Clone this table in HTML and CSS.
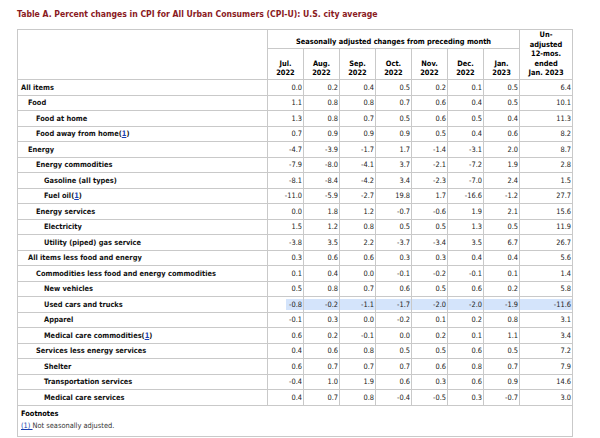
FILE: index.html
```html
<!DOCTYPE html>
<html>
<head>
<meta charset="utf-8">
<link rel="stylesheet" href="styles.css">
</head>
<body>
<div class="page">
  <h1 class="title">Table A. Percent changes in CPI for All Urban Consumers (CPI-U): U.S. city average</h1>
  <table class="cpi">
    <colgroup>
      <col class="c-label">
      <col class="c-m"><col class="c-m"><col class="c-m"><col class="c-m"><col class="c-m"><col class="c-m"><col class="c-m">
      <col class="c-y">
    </colgroup>
    <thead>
      <tr class="h1">
        <th rowspan="2"></th>
        <th colspan="7" class="sa">Seasonally adjusted changes from preceding month</th>
        <th rowspan="2" class="un">Un-<br>adjusted<br>12-mos.<br>ended<br>Jan. 2023</th>
      </tr>
      <tr class="h2">
        <th>Jul.<br>2022</th><th>Aug.<br>2022</th><th>Sep.<br>2022</th><th>Oct.<br>2022</th><th>Nov.<br>2022</th><th>Dec.<br>2022</th><th>Jan.<br>2023</th>
      </tr>
    </thead>
    <tbody>
      <tr><td class="l0">All items</td><td>0.0</td><td>0.2</td><td>0.4</td><td>0.5</td><td>0.2</td><td>0.1</td><td>0.5</td><td>6.4</td></tr>
      <tr><td class="l1">Food</td><td>1.1</td><td>0.8</td><td>0.8</td><td>0.7</td><td>0.6</td><td>0.4</td><td>0.5</td><td>10.1</td></tr>
      <tr><td class="l2">Food at home</td><td>1.3</td><td>0.8</td><td>0.7</td><td>0.5</td><td>0.6</td><td>0.5</td><td>0.4</td><td>11.3</td></tr>
      <tr><td class="l2">Food away from home(<a href="#fn1">1</a>)</td><td>0.7</td><td>0.9</td><td>0.9</td><td>0.9</td><td>0.5</td><td>0.4</td><td>0.6</td><td>8.2</td></tr>
      <tr><td class="l1">Energy</td><td>-4.7</td><td>-3.9</td><td>-1.7</td><td>1.7</td><td>-1.4</td><td>-3.1</td><td>2.0</td><td>8.7</td></tr>
      <tr><td class="l2">Energy commodities</td><td>-7.9</td><td>-8.0</td><td>-4.1</td><td>3.7</td><td>-2.1</td><td>-7.2</td><td>1.9</td><td>2.8</td></tr>
      <tr><td class="l3">Gasoline (all types)</td><td>-8.1</td><td>-8.4</td><td>-4.2</td><td>3.4</td><td>-2.3</td><td>-7.0</td><td>2.4</td><td>1.5</td></tr>
      <tr><td class="l3">Fuel oil(<a href="#fn1">1</a>)</td><td>-11.0</td><td>-5.9</td><td>-2.7</td><td>19.8</td><td>1.7</td><td>-16.6</td><td>-1.2</td><td>27.7</td></tr>
      <tr><td class="l2">Energy services</td><td>0.0</td><td>1.8</td><td>1.2</td><td>-0.7</td><td>-0.6</td><td>1.9</td><td>2.1</td><td>15.6</td></tr>
      <tr><td class="l3">Electricity</td><td>1.5</td><td>1.2</td><td>0.8</td><td>0.5</td><td>0.5</td><td>1.3</td><td>0.5</td><td>11.9</td></tr>
      <tr><td class="l3">Utility (piped) gas service</td><td>-3.8</td><td>3.5</td><td>2.2</td><td>-3.7</td><td>-3.4</td><td>3.5</td><td>6.7</td><td>26.7</td></tr>
      <tr><td class="l1">All items less food and energy</td><td>0.3</td><td>0.6</td><td>0.6</td><td>0.3</td><td>0.3</td><td>0.4</td><td>0.4</td><td>5.6</td></tr>
      <tr><td class="l2">Commodities less food and energy commodities</td><td>0.1</td><td>0.4</td><td>0.0</td><td>-0.1</td><td>-0.2</td><td>-0.1</td><td>0.1</td><td>1.4</td></tr>
      <tr><td class="l3">New vehicles</td><td>0.5</td><td>0.8</td><td>0.7</td><td>0.6</td><td>0.5</td><td>0.6</td><td>0.2</td><td>5.8</td></tr>
      <tr class="sel"><td class="l3">Used cars and trucks</td><td class="sel-first">-0.8</td><td>-0.2</td><td>-1.1</td><td>-1.7</td><td>-2.0</td><td>-2.0</td><td>-1.9</td><td>-11.6</td></tr>
      <tr><td class="l3">Apparel</td><td>-0.1</td><td>0.3</td><td>0.0</td><td>-0.2</td><td>0.1</td><td>0.2</td><td>0.8</td><td>3.1</td></tr>
      <tr><td class="l3">Medical care commodities(<a href="#fn1">1</a>)</td><td>0.6</td><td>0.2</td><td>-0.1</td><td>0.0</td><td>0.2</td><td>0.1</td><td>1.1</td><td>3.4</td></tr>
      <tr><td class="l2">Services less energy services</td><td>0.4</td><td>0.6</td><td>0.8</td><td>0.5</td><td>0.5</td><td>0.6</td><td>0.5</td><td>7.2</td></tr>
      <tr><td class="l3">Shelter</td><td>0.6</td><td>0.7</td><td>0.7</td><td>0.7</td><td>0.6</td><td>0.8</td><td>0.7</td><td>7.9</td></tr>
      <tr><td class="l3">Transportation services</td><td>-0.4</td><td>1.0</td><td>1.9</td><td>0.6</td><td>0.3</td><td>0.6</td><td>0.9</td><td>14.6</td></tr>
      <tr><td class="l3">Medical care services</td><td>0.4</td><td>0.7</td><td>0.8</td><td>-0.4</td><td>-0.5</td><td>0.3</td><td>-0.7</td><td>3.0</td></tr>
    </tbody>
    <tfoot>
      <tr>
        <td colspan="9" class="foot">
          <div class="foot-title">Footnotes</div>
          <div class="foot-text" id="fn1"><a href="#">(1) </a>Not seasonally adjusted.</div>
        </td>
      </tr>
    </tfoot>
  </table>
</div>
</body>
</html>
```
FILE: styles.css
```css
html, body {
  margin: 0;
  padding: 0;
  background: #fff;
}
body {
  font-family: "DejaVu Sans Condensed", "DejaVu Sans", Verdana, sans-serif;
  color: #000;
}
.page {
  padding: 0 0 0 17px;
}
.title {
  margin: 0;
  padding-top: 9px;
  height: 22px;
  box-sizing: border-box;
  font-size: 8.6px;
  line-height: 10px;
  font-weight: bold;
  color: #8a1a1e;
}
.cpi {
  border-collapse: collapse;
  table-layout: fixed;
  width: 555px;
  margin-top: 7px;
  font-size: 7.4px;
}
.c-label { width: 250px; }
.c-m { width: 36px; }
.c-y { width: 53px; }
.cpi th, .cpi td {
  border: 1px solid #c9c9c9;
  padding: 0;
}
.cpi th {
  font-weight: bold;
  text-align: center;
  line-height: 9.6px;
}
.h1 { height: 19px; }
.cpi th.sa { vertical-align: bottom; padding-bottom: 1px; }
.h2 { height: 31px; }
.h2 th { vertical-align: bottom; padding-bottom: 1px; }
.cpi th.un { vertical-align: bottom; padding-bottom: 1px; }
.cpi tbody tr { height: 15.5px; }
.cpi tbody td {
  text-align: right;
  padding-right: 1px;
  color: #222;
  line-height: 9px;
}
.cpi tbody td:first-child {
  text-align: left;
  font-weight: bold;
  color: #111;
}
.cpi tbody td.l0 { padding-left: 3px; }
.cpi tbody td.l1 { padding-left: 10px; }
.cpi tbody td.l2 { padding-left: 18px; }
.cpi tbody td.l3 { padding-left: 26px; }
.cpi a {
  color: #1a3fb0;
  text-decoration: underline;
}
tr.sel td {
  background: linear-gradient(#d4e4fb, #d4e4fb) center / 100% 11px no-repeat;
}
tr.sel td:first-child {
  background: none;
}
tr.sel td.sel-first {
  background: linear-gradient(#d4e4fb, #d4e4fb) right center / 17px 11px no-repeat;
}
.cpi td.foot {
  height: 27px;
  text-align: left;
  vertical-align: top;
  padding: 3px 0 0 3px;
}
.foot-title {
  font-weight: bold;
  line-height: 10px;
}
.foot-text {
  line-height: 13px;
  color: #333;
}
```
